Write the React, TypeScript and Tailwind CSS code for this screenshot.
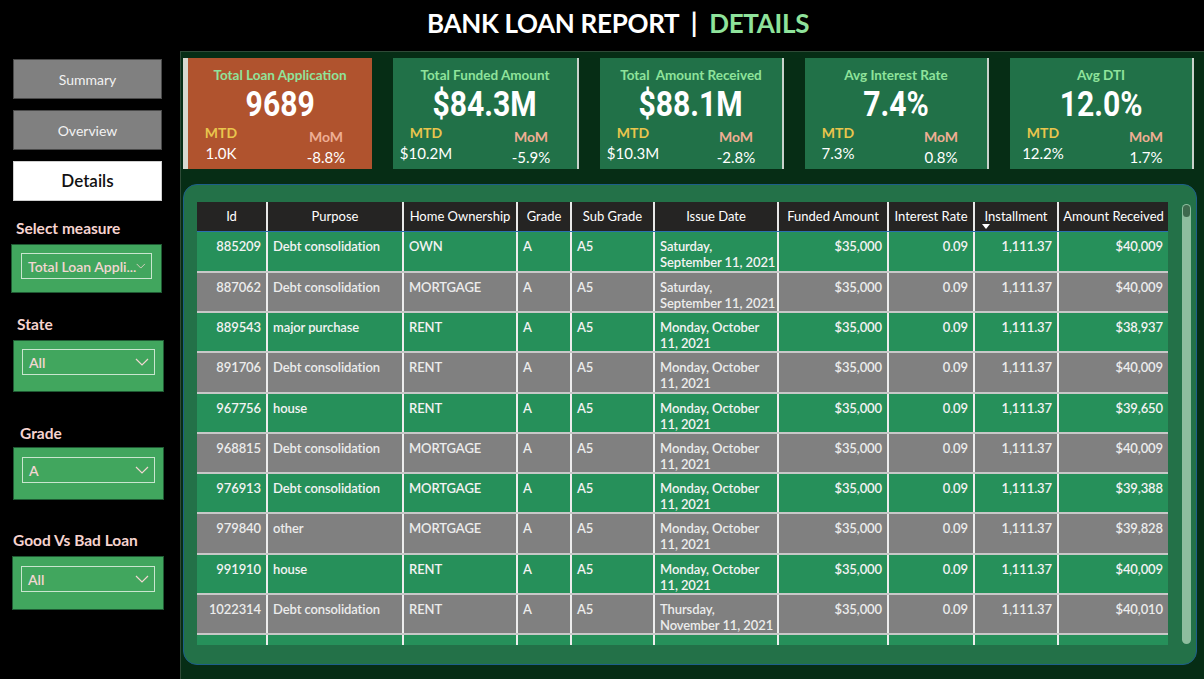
import React from "react";

const FONT = { fontFamily: 'Lato, "Open Sans", sans-serif' };
const NUM = { fontFamily: 'Roboto, "Liberation Sans", sans-serif' };

type Card = {
  title: string;
  value: string;
  mtd: string;
  mom: string;
  orange?: boolean;
  w: string;
};

const cards: Card[] = [
  { title: "Total Loan Application", value: "9689", mtd: "1.0K", mom: "-8.8%", orange: true, w: "w-[189px]" },
  { title: "Total Funded Amount", value: "$84.3M", mtd: "$10.2M", mom: "-5.9%", w: "w-[186px]" },
  { title: "Total  Amount Received", value: "$88.1M", mtd: "$10.3M", mom: "-2.8%", w: "w-[184px]" },
  { title: "Avg Interest Rate", value: "7.4%", mtd: "7.3%", mom: "0.8%", w: "w-[184px]" },
  { title: "Avg DTI", value: "12.0%", mtd: "12.2%", mom: "1.7%", w: "w-[184px]" },
];

const cols = [
  { name: "Id", w: "w-[71px]", align: "text-right" },
  { name: "Purpose", w: "w-[136px]", align: "text-left" },
  { name: "Home Ownership", w: "w-[114px]", align: "text-left" },
  { name: "Grade", w: "w-[54px]", align: "text-left" },
  { name: "Sub Grade", w: "w-[83px]", align: "text-left" },
  { name: "Issue Date", w: "w-[124px]", align: "text-left" },
  { name: "Funded Amount", w: "w-[110px]", align: "text-right" },
  { name: "Interest Rate", w: "w-[86px]", align: "text-right" },
  { name: "Installment", w: "w-[84px]", align: "text-right" },
  { name: "Amount Received", w: "w-[109px]", align: "text-right" },
];

const SAT: [string, string] = ["Saturday,", "September 11, 2021"];
const MON: [string, string] = ["Monday, October", "11, 2021"];
const THU: [string, string] = ["Thursday,", "November 11, 2021"];

const rows: [string, string, string, [string, string], string][] = [
  ["885209", "Debt consolidation", "OWN", SAT, "$40,009"],
  ["887062", "Debt consolidation", "MORTGAGE", SAT, "$40,009"],
  ["889543", "major purchase", "RENT", MON, "$38,937"],
  ["891706", "Debt consolidation", "RENT", MON, "$40,009"],
  ["967756", "house", "RENT", MON, "$39,650"],
  ["968815", "Debt consolidation", "MORTGAGE", MON, "$40,009"],
  ["976913", "Debt consolidation", "MORTGAGE", MON, "$39,388"],
  ["979840", "other", "MORTGAGE", MON, "$39,828"],
  ["991910", "house", "RENT", MON, "$40,009"],
  ["1022314", "Debt consolidation", "RENT", THU, "$40,010"],
];

function Chevron() {
  return (
    <svg width="14" height="8" viewBox="0 0 14 8" fill="none">
      <path d="M1 1l6 6 6-6" stroke="#f3d6d2" strokeWidth="1.2" />
    </svg>
  );
}

function Slicer({ label, value, labelCls, boxCls }: { label: string; value: string; labelCls: string; boxCls: string }) {
  return (
    <div className="flex flex-col">
      <div className={`text-[15.5px] font-bold text-[#f6d3cf] leading-[20px] ${labelCls}`}>{label}</div>
      <div className={`bg-[#41a65e] border border-[#1f5a33] ${boxCls}`}>
        <div className="h-[26px] border border-[#c9e6cf] flex items-center justify-between pl-[6px] pr-[5px]">
          <span className="text-[14px] font-semibold text-[#f3d6d2] whitespace-nowrap">{value}</span>
          <Chevron />
        </div>
      </div>
    </div>
  );
}

export default function App() {
  return (
    <div className="w-[1204px] h-[679px] bg-black flex flex-col overflow-hidden" style={FONT}>
      {/* Header */}
      <div className="h-[51px] flex items-center justify-center pl-[32px] pb-[4px]">
        <div className="text-[26px] font-bold text-white whitespace-pre tracking-[-0.3px]">
          BANK LOAN REPORT  |  <span className="text-[#8fe39b]">DETAILS</span>
        </div>
      </div>

      <div className="flex-1 flex">
        {/* Sidebar */}
        <div className="w-[180px] flex flex-col pt-[8px]">
          <div className="ml-[13px] w-[149px] h-[40px] bg-[#808080] border border-[#4a4a4a] flex items-center justify-center text-[14px] text-[#f2f2f2]">
            Summary
          </div>
          <div className="ml-[13px] mt-[11px] w-[149px] h-[40px] bg-[#808080] border border-[#4a4a4a] flex items-center justify-center text-[14px] text-[#f2f2f2]">
            Overview
          </div>
          <div className="ml-[13px] mt-[11px] w-[149px] h-[40px] bg-white border border-[#cfcfcf] flex items-center justify-center text-[17px] font-semibold text-[#111]">
            Details
          </div>

          <div className="mt-[17px]">
            <Slicer label="Select measure" value="Total Loan Appli..." labelCls="ml-[16px] mb-[6px]" boxCls="ml-[11px] w-[151px] h-[49px] px-[9px] pt-[8px]" />
          </div>
          <div className="mt-[21px]">
            <Slicer label="State" value="All" labelCls="ml-[17px] mb-[6px]" boxCls="ml-[13px] w-[151px] h-[52px] px-[8px] pt-[8px]" />
          </div>
          <div className="mt-[31px]">
            <Slicer label="Grade" value="A" labelCls="ml-[20px] mb-[4px]" boxCls="ml-[13px] w-[151px] h-[53px] px-[8px] pt-[9px]" />
          </div>
          <div className="mt-[30px]">
            <Slicer label="Good Vs Bad Loan" value="All" labelCls="ml-[13px] mb-[6px]" boxCls="ml-[12px] w-[152px] h-[54px] px-[8px] pt-[9px]" />
          </div>
        </div>

        {/* Main */}
        <div className="flex-1 bg-[#062d15] border-t border-l border-[#2f4a37] flex flex-col pl-[2px] pt-[6px]">
          {/* Cards */}
          <div className="flex gap-[21px]">
            {cards.map((c) => (
              <div
                key={c.title}
                className={`${c.w} h-[111px] flex flex-col ${
                  c.orange
                    ? "bg-[#b0532e] border-l-[5px] border-[#d8d8d0]"
                    : "bg-[#217148] border-r-2 border-[#c9d2cc]"
                }`}
              >
                <div className="text-center text-[13.5px] font-bold text-[#8fe39b] mt-[9px] leading-[17px] whitespace-pre">
                  {c.title}
                </div>
                <div className="flex justify-center mt-[3px]">
                  <div className="inline-block text-[35px] font-bold text-white leading-[36px] scale-x-[0.86]" style={NUM}>
                    {c.value}
                  </div>
                </div>
                <div className="flex justify-between pl-[3px] pr-[16px] mt-[2px]">
                  <div className="w-[60px] flex flex-col items-center">
                    <div className="text-[14px] font-bold text-[#e9c54d] leading-[16px]">MTD</div>
                    <div className="text-[15px] text-white leading-[20px] mt-[2px]">{c.mtd}</div>
                  </div>
                  <div className="w-[60px] flex flex-col items-center mt-[4px]">
                    <div className="text-[14px] font-bold text-[#eeae94] leading-[16px]">MoM</div>
                    <div className="text-[15px] text-white leading-[20px] mt-[2px]">{c.mom}</div>
                  </div>
                </div>
              </div>
            ))}
          </div>

          {/* Table container */}
          <div className="mt-[15px] w-[1014px] h-[481px] bg-[#237148] rounded-[14px] border border-[#1d5e8a] flex pl-[13px] pt-[17px] relative">
            <div className="w-[971px] h-[443px] overflow-hidden flex flex-col">
              {/* header */}
              <div className="flex bg-[#252423] h-[31px] border-b border-[#2a6fb0]">
                {cols.map((c, i) => (
                  <div
                    key={c.name}
                    className={`${c.w} relative flex items-center justify-center text-[13px] text-white whitespace-nowrap ${
                      i < cols.length - 1 ? "border-r-2 border-[#e8e8e8]" : ""
                    }`}
                  >
                    {c.name}
                    {c.name === "Installment" && (
                      <svg className="absolute left-[7px] bottom-[2px]" width="8" height="5" viewBox="0 0 8 5">
                        <path d="M0 0h8L4 5z" fill="#fff" />
                      </svg>
                    )}
                  </div>
                ))}
              </div>
              {rows.map((r, ri) => {
                const green = ri % 2 === 0;
                const cells: React.ReactNode[] = [
                  r[0],
                  r[1],
                  r[2],
                  "A",
                  "A5",
                  <>
                    <div>{r[3][0]}</div>
                    <div>{r[3][1]}</div>
                  </>,
                  "$35,000",
                  "0.09",
                  "1,111.37",
                  r[4],
                ];
                return (
                  <div
                    key={r[0]}
                    className={`flex h-[41px] border-b-2 border-[#c8c8c8] ${
                      green ? "bg-[#26905a] text-[#f3f3f3]" : "bg-[#808080] text-[#ececec]"
                    }`}
                  >
                    {cols.map((c, ci) => (
                      <div
                        key={c.name}
                        className={`${c.w} ${c.align} text-[13px] font-semibold leading-[16px] pt-[6px] px-[5px] whitespace-nowrap tracking-[-0.1px] ${
                          ci < cols.length - 1 ? "border-r-2 border-[#ededed]" : ""
                        }`}
                      >
                        {cells[ci]}
                      </div>
                    ))}
                  </div>
                );
              })}
              <div className="flex h-[10px] bg-[#26905a]">
                {cols.map((c, ci) => (
                  <div key={c.name} className={`${c.w} ${ci < cols.length - 1 ? "border-r-2 border-[#ededed]" : ""}`} />
                ))}
              </div>
            </div>
            {/* scrollbar */}
            <div className="ml-[14px] mt-[2px] w-[9px] h-[440px] rounded-full bg-[#8dbd9e] flex flex-col items-center pt-[1px]">
              <div className="w-[7px] h-[12px] rounded-full bg-[#3e6a4e]" />
            </div>
          </div>
        </div>
      </div>
    </div>
  );
}
